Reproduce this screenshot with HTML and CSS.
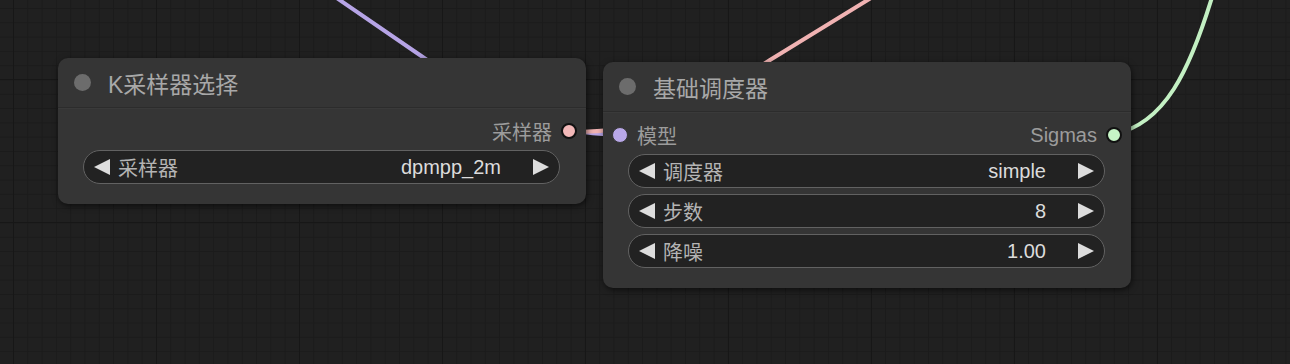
FILE: index.html
```html
<!DOCTYPE html>
<html lang="zh-CN">
<head>
    <meta charset="UTF-8">
    <meta name="viewport" content="width=device-width, initial-scale=1.0">
    <title>节点画布</title>
    <link rel="stylesheet" href="styles.css">
</head>
<body>
    <!-- 画布：连线在下，节点在上 -->
    <div class="canvas">
        <svg class="wires" width="1290" height="364" viewBox="0 0 1290 364">
            <path class="wire wire-model" d="M328 -8 L430 62 C500 110 540 133 620 135" />
            <path class="wire wire-sampler" d="M569 132 C600 132 640 130 690 110 L770 60 L884 -10" />
            <path class="wire wire-sigmas" d="M1114 134 C1165 124 1190 70 1213 -6" />
        </svg>

        <!-- 节点 1：K采样器选择 -->
        <div class="node node-sampler">
            <div class="node-title">
                <span class="title-dot"></span>
                <span class="title-text">K采样器选择</span>
            </div>
            <div class="node-body">
                <div class="slot-row">
                    <span></span>
                    <span class="slot out">
                        <span class="slot-label">采样器</span>
                        <span class="dot dot-sampler"></span>
                    </span>
                </div>
                <div class="widgets">
                    <div class="widget">
                        <svg class="arrow" width="16" height="16" viewBox="0 0 16 16"><polygon points="0,8 16,0 16,16" /></svg>
                        <span class="w-label">采样器</span>
                        <span class="w-value">dpmpp_2m</span>
                        <svg class="arrow" width="16" height="16" viewBox="0 0 16 16"><polygon points="16,8 0,0 0,16" /></svg>
                    </div>
                </div>
            </div>
        </div>

        <!-- 节点 2：基础调度器 -->
        <div class="node node-scheduler">
            <div class="node-title">
                <span class="title-dot"></span>
                <span class="title-text">基础调度器</span>
            </div>
            <div class="node-body">
                <div class="slot-row">
                    <span class="slot in">
                        <span class="dot dot-model"></span>
                        <span class="slot-label">模型</span>
                    </span>
                    <span class="slot out">
                        <span class="slot-label">Sigmas</span>
                        <span class="dot dot-sigmas"></span>
                    </span>
                </div>
                <div class="widgets">
                    <div class="widget">
                        <svg class="arrow" width="16" height="16" viewBox="0 0 16 16"><polygon points="0,8 16,0 16,16" /></svg>
                        <span class="w-label">调度器</span>
                        <span class="w-value">simple</span>
                        <svg class="arrow" width="16" height="16" viewBox="0 0 16 16"><polygon points="16,8 0,0 0,16" /></svg>
                    </div>
                    <div class="widget">
                        <svg class="arrow" width="16" height="16" viewBox="0 0 16 16"><polygon points="0,8 16,0 16,16" /></svg>
                        <span class="w-label">步数</span>
                        <span class="w-value">8</span>
                        <svg class="arrow" width="16" height="16" viewBox="0 0 16 16"><polygon points="16,8 0,0 0,16" /></svg>
                    </div>
                    <div class="widget">
                        <svg class="arrow" width="16" height="16" viewBox="0 0 16 16"><polygon points="0,8 16,0 16,16" /></svg>
                        <span class="w-label">降噪</span>
                        <span class="w-value">1.00</span>
                        <svg class="arrow" width="16" height="16" viewBox="0 0 16 16"><polygon points="16,8 0,0 0,16" /></svg>
                    </div>
                </div>
            </div>
        </div>
    </div>
</body>
</html>
```

FILE: styles.css
```css
* {
    margin: 0;
    padding: 0;
    box-sizing: border-box;
}

body {
    width: 1290px;
    height: 364px;
    overflow: hidden;
    background-color: #1f1f1f;
    font-family: "Liberation Sans", "Noto Sans CJK SC", sans-serif;
}

/* Latar grid */
.canvas {
    position: relative;
    width: 1290px;
    height: 364px;
    background-color: #202020;
    background-image:
        linear-gradient(#171717 1px, transparent 1px),
        linear-gradient(90deg, #171717 1px, transparent 1px),
        linear-gradient(#1b1b1b 1px, transparent 1px),
        linear-gradient(90deg, #1b1b1b 1px, transparent 1px);
    background-size: 143px 143px, 143px 143px, 14.3px 14.3px, 14.3px 14.3px;
    background-position: 13px 79px, 13px 79px, 13px 8px, 13px 8px;
}

/* Kabel penghubung */
.wires {
    position: absolute;
    left: 0;
    top: 0;
}

.wire {
    fill: none;
    stroke-width: 4;
    stroke-linecap: round;
}

.wire-model {
    stroke: #b6a4e6;
}

.wire-sampler {
    stroke: #f0b2b2;
}

.wire-sigmas {
    stroke: #c3f0c3;
}

/* Node */
.node {
    position: absolute;
    width: 528px;
    background-color: #353535;
    border-radius: 10px;
    box-shadow: 1px 2px 6px rgba(0, 0, 0, 0.6);
}

.node-sampler {
    left: 58px;
    top: 58px;
}

.node-scheduler {
    left: 603px;
    top: 62px;
}

.node-title {
    display: flex;
    align-items: center;
    height: 50px;
    padding-left: 16px;
    border-bottom: 1px solid #2c2c2c;
    box-shadow: 0 1px 0 #3a3a3a;
}

.title-dot {
    width: 17px;
    height: 17px;
    border-radius: 50%;
    background-color: #6c6c6c;
}

.title-text {
    margin-left: 17px;
    font-size: 23px;
    color: #a8a8a8;
}

.node-body {
    padding: 8px 0 20px 0;
}

.slot-row {
    display: flex;
    justify-content: space-between;
    align-items: center;
    height: 30px;
    padding: 0 9px;
}

.slot {
    display: flex;
    align-items: center;
    gap: 9px;
}

.slot-label {
    font-size: 20px;
    color: #9c9c9c;
}

.dot {
    width: 16px;
    height: 16px;
    border-radius: 50%;
}

.dot-sampler {
    background-color: #f2b8b8;
    border: 2px solid #111;
}

.dot-sigmas {
    background-color: #c6f5c6;
    border: 2px solid #111;
}

.dot-model {
    background-color: #b9a8e8;
    border: 1px solid #353535;
}

/* Widget combo / angka */
.widgets {
    display: flex;
    flex-direction: column;
    gap: 6px;
    margin-top: 4px;
    padding: 0 26px 0 25px;
}

.widget {
    display: flex;
    align-items: center;
    height: 34px;
    padding: 0 10px;
    background-color: #222222;
    border: 1.5px solid #626262;
    border-radius: 17px;
}

.arrow {
    fill: #dddddd;
    flex-shrink: 0;
}

.w-label {
    margin-left: 8px;
    font-size: 20px;
    color: #b4b4b4;
}

.w-value {
    flex: 1;
    text-align: right;
    margin-right: 32px;
    font-size: 20px;
    color: #dcdcdc;
}
```
